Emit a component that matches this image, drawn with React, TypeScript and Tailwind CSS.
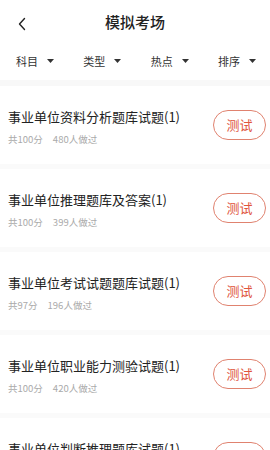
import React from "react";

type Exam = { title: string; score: number; count: number };

const exams: Exam[] = [
  { title: "事业单位资料分析题库试题(1)", score: 100, count: 480 },
  { title: "事业单位推理题库及答案(1)", score: 100, count: 399 },
  { title: "事业单位考试试题题库试题(1)", score: 97, count: 196 },
  { title: "事业单位职业能力测验试题(1)", score: 100, count: 420 },
  { title: "事业单位判断推理题库试题(1)", score: 100, count: 352 },
];

const filters = ["科目", "类型", "热点", "排序"];

const Caret = () => (
  <svg width="7" height="4" viewBox="0 0 7 4" className="ml-[9px]">
    <path d="M0 0H7L3.5 4Z" fill="#333" />
  </svg>
);

export default function App() {
  return (
    <div
      className="w-[270px] h-[450px] overflow-hidden bg-white"
      style={{ fontFamily: '"Noto Sans CJK SC", "Noto Sans", sans-serif' }}
    >
      {/* header */}
      <div className="relative h-[48px] flex items-center justify-center">
        <button className="absolute left-[15px] top-[15px] p-0.5">
          <svg width="10" height="14" viewBox="0 0 10 14">
            <path d="M7.5 1.5L2.5 7L7.5 12.5" stroke="#222" strokeWidth="1.4" fill="none" strokeLinecap="round" strokeLinejoin="round" />
          </svg>
        </button>
        <h1 className="text-[15px] font-medium text-[#222] -mt-[4px]">模拟考场</h1>
      </div>

      {/* filters */}
      <div className="h-[32px] flex items-center justify-between pl-[16px] pr-[14px] pb-[8px] pt-[2px]">
        {filters.map((f) => (
          <div key={f} className="flex items-center text-[11px] text-[#333]">
            {f}
            <Caret />
          </div>
        ))}
      </div>
      <div className="h-[6px] bg-[#f8f8f8]" />

      {/* list */}
      <div className="flex flex-col">
        {exams.map((e) => (
          <div key={e.title} className="border-b-[5px] border-[#fafafa]">
            <div className="h-[78px] flex items-center pl-[8px] pr-[4px]">
              <div className="flex-1 min-w-0 mt-[2px]">
                <div className="text-[13px] leading-[18px] text-[#222] whitespace-nowrap">{e.title}</div>
                <div className="mt-[7px] flex text-[9.5px] leading-[12px] text-[#aaa]">
                  <span>共{e.score}分</span>
                  <span className="ml-[10px]">{e.count}人做过</span>
                </div>
              </div>
              <button className="w-[53px] h-[30px] rounded-full border border-[#e0826f] text-[#e0553d] text-[13px] flex items-center justify-center shrink-0">
                测试
              </button>
            </div>
          </div>
        ))}
      </div>
    </div>
  );
}
